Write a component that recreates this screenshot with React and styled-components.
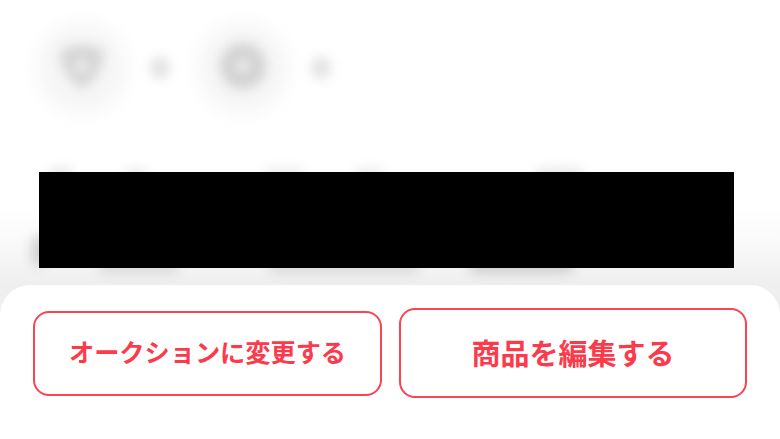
import React from "react";
import styled, { createGlobalStyle } from "styled-components";

const GlobalStyle = createGlobalStyle`
  html, body {
    margin: 0;
    padding: 0;
    background: #efefef;
    font-family: "Noto Sans CJK JP", "Noto Sans", sans-serif;
  }
`;

const Page = styled.div`
  width: 780px;
  height: 439px;
  overflow: hidden;
  display: flex;
  flex-direction: column;
  background: #efefef;
`;

const Hero = styled.section`
  height: 287px;
  margin-bottom: -2px;
  flex-shrink: 0;
  background: linear-gradient(#ffffff 0, #ffffff 205px, #fafafa 240px, #eeeeee 287px);
  overflow: hidden;
`;

const BadgeRow = styled.div`
  display: flex;
  align-items: center;
  padding: 18px 0 0 32px;
  height: 100px;
`;

const Badge = styled.div`
  position: relative;
  width: 100px;
  height: 100px;
  display: flex;
  align-items: center;
  justify-content: center;
`;

const BadgeGlow = styled.div`
  position: absolute;
  inset: 4px;
  border-radius: 50%;
  background: #f6f6f6;
  filter: blur(9px);
`;

const BadgeIcon = styled.svg`
  position: relative;
  width: 50px;
  height: 50px;
  margin-top: -4px;
  filter: blur(6px);
`;

const DotSlot = styled.div`
  width: 61px;
  display: flex;
  justify-content: center;
  padding-right: 6px;
  box-sizing: border-box;
`;

const Dot = styled.div`
  width: 20px;
  height: 22px;
  border-radius: 50%;
  background: #e2e2e2;
  filter: blur(6px);
`;

const Summary = styled.div`
  position: relative;
  margin: 54px 46px 0 39px;
  height: 96px;
  display: flex;
  flex-direction: column;
  justify-content: space-between;
`;

const SmudgeRow = styled.div`
  display: flex;
  padding-left: ${(p) => p.$left}px;
  margin: ${(p) => p.$margin};
`;

const Smudge = styled.div`
  width: ${(p) => p.$width}px;
  height: 14px;
  margin-right: ${(p) => p.$after || 0}px;
  border-radius: 7px;
  background: ${(p) => p.$tone};
  filter: blur(6px);
`;

const Redaction = styled.div`
  position: absolute;
  inset: 0;
  background: #000;
`;

const EdgeShade = styled.div`
  position: absolute;
  left: -7px;
  bottom: 2px;
  width: 14px;
  height: 30px;
  border-radius: 7px;
  background: #cdcdcd;
  filter: blur(6px);
`;

const Sheet = styled.section`
  flex: 1;
  position: relative;
  background: #fff;
  border-radius: 30px 30px 0 0;
  padding-top: 23px;
`;

const ButtonRow = styled.div`
  display: flex;
  align-items: center;
  gap: 17px;
  padding: 0 33px;
`;

const ActionButton = styled.button`
  width: ${(p) => p.$width}px;
  height: ${(p) => p.$height}px;
  box-sizing: border-box;
  background: #fff;
  border: 2px solid #fb4353;
  border-radius: 16px;
  color: #fb3b4b;
  font-family: "Noto Sans CJK JP", "Noto Sans", sans-serif;
  font-size: ${(p) => p.$size}px;
  font-weight: 700;
  line-height: 1;
  padding: 0 0 2px;
`;

export default function App() {
  return (
    <Page>
      <GlobalStyle />
      <Hero>
        <BadgeRow>
          <Badge>
            <BadgeGlow />
            <BadgeIcon viewBox="0 0 50 50">
              <path
                d="M4 9 Q25 0 46 9 Q48 32 25 48 Q2 32 4 9 Z M25 19 a6 6 0 1 0 0.01 0 Z"
                fill="#d4d4d4"
                fillRule="evenodd"
              />
            </BadgeIcon>
          </Badge>
          <DotSlot>
            <Dot />
          </DotSlot>
          <Badge>
            <BadgeGlow />
            <BadgeIcon viewBox="0 0 50 50">
              <path
                d="M25 2 a23 23 0 1 0 0.01 0 Z M25 19 a6 6 0 1 1 -0.01 0 Z"
                fill="#d2d2d2"
                fillRule="evenodd"
              />
            </BadgeIcon>
          </Badge>
          <DotSlot>
            <Dot />
          </DotSlot>
        </BadgeRow>
        <Summary>
          <SmudgeRow $left={10} $margin="-4px 0 0">
            <Smudge $width={24} $after={50} $tone="#e6e6e6" />
            <Smudge $width={26} $after={115} $tone="#ececec" />
            <Smudge $width={40} $after={50} $tone="#ececec" />
            <Smudge $width={30} $after={150} $tone="#ececec" />
            <Smudge $width={50} $tone="#e8e8e8" />
          </SmudgeRow>
          <SmudgeRow $left={60} $margin="0 0 -5px">
            <Smudge $width={80} $after={90} $tone="#d8d8d8" />
            <Smudge $width={150} $after={50} $tone="#d8d8d8" />
            <Smudge $width={105} $tone="#cccccc" />
          </SmudgeRow>
          <EdgeShade />
          <Redaction />
        </Summary>
      </Hero>
      <Sheet>
        <ButtonRow>
          <ActionButton $width={349} $height={85} $size={25.2}>
            オークションに変更する
          </ActionButton>
          <ActionButton $width={348} $height={90} $size={29}>
            商品を編集する
          </ActionButton>
        </ButtonRow>
      </Sheet>
    </Page>
  );
}
